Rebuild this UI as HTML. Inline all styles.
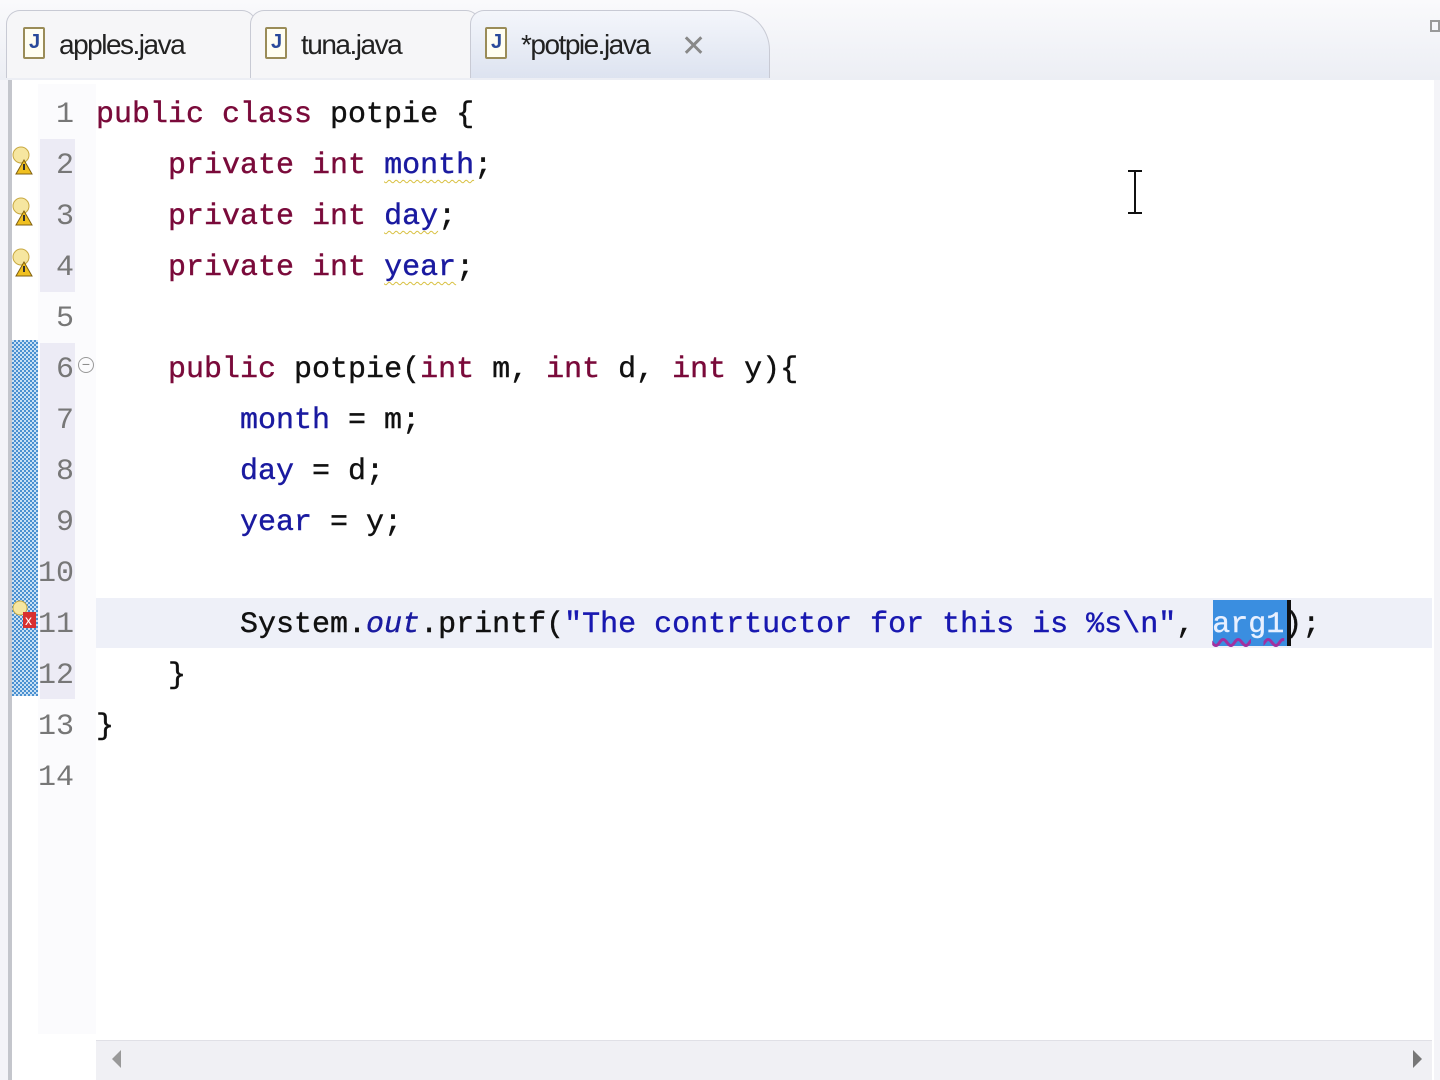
<!DOCTYPE html>
<html><head><meta charset="utf-8"><style>
*{margin:0;padding:0;box-sizing:border-box}
body{width:1440px;height:1080px;background:#f4f4f8;position:relative;overflow:hidden;font-family:"Liberation Mono",monospace}
.top{position:absolute;left:0;top:0;width:1440px;height:80px;background:linear-gradient(#fafafc,#eceef4)}
.tab{position:absolute;top:10px;height:68px;border:1px solid #c8cad4;border-bottom:none;border-radius:14px 14px 0 0;background:#f6f6f8;font-family:"Liberation Sans",sans-serif;font-size:28px;color:#222;transform-origin:left;}
.tab span{position:absolute;top:18px;letter-spacing:-1.5px}
.ic{position:absolute;top:16px;width:22px;height:32px;border:2px solid #9a8c58;background:#fffef2;border-radius:2px}
.ic:after{content:"J";position:absolute;left:4px;top:2px;font:bold 20px "Liberation Sans",sans-serif;color:#2a4a9a}
.editor{position:absolute;left:8px;top:80px;width:1426px;height:1000px;background:#fff;border-left:4px solid #c4c6cc}
.gut{position:absolute;left:38px;top:84px;width:58px;height:950px;background:#fbfbfd}
.ln{position:absolute;left:30px;width:45px;height:51px;background:#ecebf5}
.num{position:absolute;left:30px;width:44px;text-align:right;font-size:30px;color:#777;line-height:51px}
.code{position:absolute;left:96px;font-size:30px;line-height:51px;white-space:pre;color:#111;-webkit-text-stroke:0.4px}
.k{color:#7a0a3a}.f{color:#1a1aa0}.s{color:#1818b0}
.w{text-decoration:underline wavy #d8c040;text-decoration-thickness:1px;text-underline-offset:6px}
.bulb{position:absolute;left:12px;width:24px;height:30px}
</style></head><body>
<div class="top"></div>
<div class="tab" style="left:6px;width:250px"><div class="ic" style="left:16px"></div><span style="left:52px">apples.java</span></div>
<div class="tab" style="left:250px;width:230px"><div class="ic" style="left:14px"></div><span style="left:50px">tuna.java</span></div>
<div class="tab" style="left:470px;width:300px;background:linear-gradient(#f4f6fb,#dde3f0);border-radius:14px 40px 0 0"><div class="ic" style="left:14px"></div><span style="left:50px">*potpie.java</span><span style="left:210px;color:#888;font-size:30px">✕</span></div>
<div style="position:absolute;left:1430px;top:20px;width:10px;height:12px;border:2px solid #999"></div>
<div class="editor"></div>
<div class="gut"></div>
<div style="position:absolute;left:12px;top:340px;width:26px;height:356px;background:repeating-conic-gradient(#4a90d0 0 25%,#c8e0f4 0 50%) 0 0/4px 4px"></div>
<div class="ln" style="top:139px;height:153px;left:40px;width:35px"></div>
<div class="ln" style="top:343px;height:356px;left:40px;width:35px"></div>
<div style="position:absolute;left:96px;top:598px;width:1336px;height:50px;background:#eef0f8"></div>
<div style="position:absolute;left:1213px;top:600px;width:76px;height:46px;background:#3a8ee0"></div>
<div style="position:absolute;left:1287px;top:600px;width:4px;height:46px;background:#111"></div>
<div class="num" style="top:90px">1</div><div class="num" style="top:141px">2</div><div class="num" style="top:192px">3</div><div class="num" style="top:243px">4</div><div class="num" style="top:294px">5</div><div class="num" style="top:345px">6</div><div class="num" style="top:396px">7</div><div class="num" style="top:447px">8</div><div class="num" style="top:498px">9</div><div class="num" style="top:549px">10</div><div class="num" style="top:600px">11</div><div class="num" style="top:651px">12</div><div class="num" style="top:702px">13</div><div class="num" style="top:753px">14</div>
<div style="position:absolute;left:78px;top:357px;width:16px;height:16px;border:1px solid #999;border-radius:50%;font-size:14px;line-height:13px;text-align:center;color:#888;font-family:'Liberation Sans'">−</div>
<svg class="bulb" style="top:146px" viewBox="0 0 24 30"><circle cx="9" cy="9" r="8" fill="#f6e6a0" stroke="#c8a840"/><path d="M12 14 L20 28 L4 28Z" fill="#f0c020" stroke="#806010"/><rect x="11" y="18" width="2" height="6" fill="#333"/></svg>
<svg class="bulb" style="top:197px" viewBox="0 0 24 30"><circle cx="9" cy="9" r="8" fill="#f6e6a0" stroke="#c8a840"/><path d="M12 14 L20 28 L4 28Z" fill="#f0c020" stroke="#806010"/><rect x="11" y="18" width="2" height="6" fill="#333"/></svg>
<svg class="bulb" style="top:248px" viewBox="0 0 24 30"><circle cx="9" cy="9" r="8" fill="#f6e6a0" stroke="#c8a840"/><path d="M12 14 L20 28 L4 28Z" fill="#f0c020" stroke="#806010"/><rect x="11" y="18" width="2" height="6" fill="#333"/></svg>
<svg class="bulb" style="top:600px" viewBox="0 0 24 30"><circle cx="8" cy="8" r="7" fill="#f6e6a0" stroke="#c8a840"/><rect x="11" y="12" width="13" height="16" fill="#d83030"/><text x="13" y="25" font-size="14" fill="#fff" font-family="Liberation Sans">x</text></svg>
<div class="code" style="top:90px"><span class="k">public class</span> potpie {</div>
<div class="code" style="top:141px">    <span class="k">private int</span> <span class="f w">month</span>;</div>
<div class="code" style="top:192px">    <span class="k">private int</span> <span class="f w">day</span>;</div>
<div class="code" style="top:243px">    <span class="k">private int</span> <span class="f w">year</span>;</div>
<div class="code" style="top:345px">    <span class="k">public</span> potpie(<span class="k">int</span> m, <span class="k">int</span> d, <span class="k">int</span> y){</div>
<div class="code" style="top:396px">        <span class="f">month</span> = m;</div>
<div class="code" style="top:447px">        <span class="f">day</span> = d;</div>
<div class="code" style="top:498px">        <span class="f">year</span> = y;</div>
<div class="code" style="top:600px">        System.<i class="f">out</i>.printf(<span class="s">"The contrtuctor for this is %s\n"</span>, <span style="color:#e8f0ff;text-decoration:underline wavy #a030a0;text-underline-offset:6px">arg1</span>);</div>
<div class="code" style="top:651px">    }</div>
<div class="code" style="top:702px">}</div>
<div style="position:absolute;left:1134px;top:170px;width:2px;height:44px;background:#111"></div>
<div style="position:absolute;left:1128px;top:170px;width:14px;height:2px;background:#111"></div>
<div style="position:absolute;left:1128px;top:212px;width:14px;height:2px;background:#111"></div>
<div style="position:absolute;left:96px;top:1040px;width:1336px;height:40px;background:#f0f0f4;border-top:1px solid #e0e0e6"></div>
<div style="position:absolute;left:112px;top:1050px;width:0;height:0;border-top:9px solid transparent;border-bottom:9px solid transparent;border-right:9px solid #999"></div>
<div style="position:absolute;left:1413px;top:1050px;width:0;height:0;border-top:9px solid transparent;border-bottom:9px solid transparent;border-left:9px solid #777"></div>
</body></html>
